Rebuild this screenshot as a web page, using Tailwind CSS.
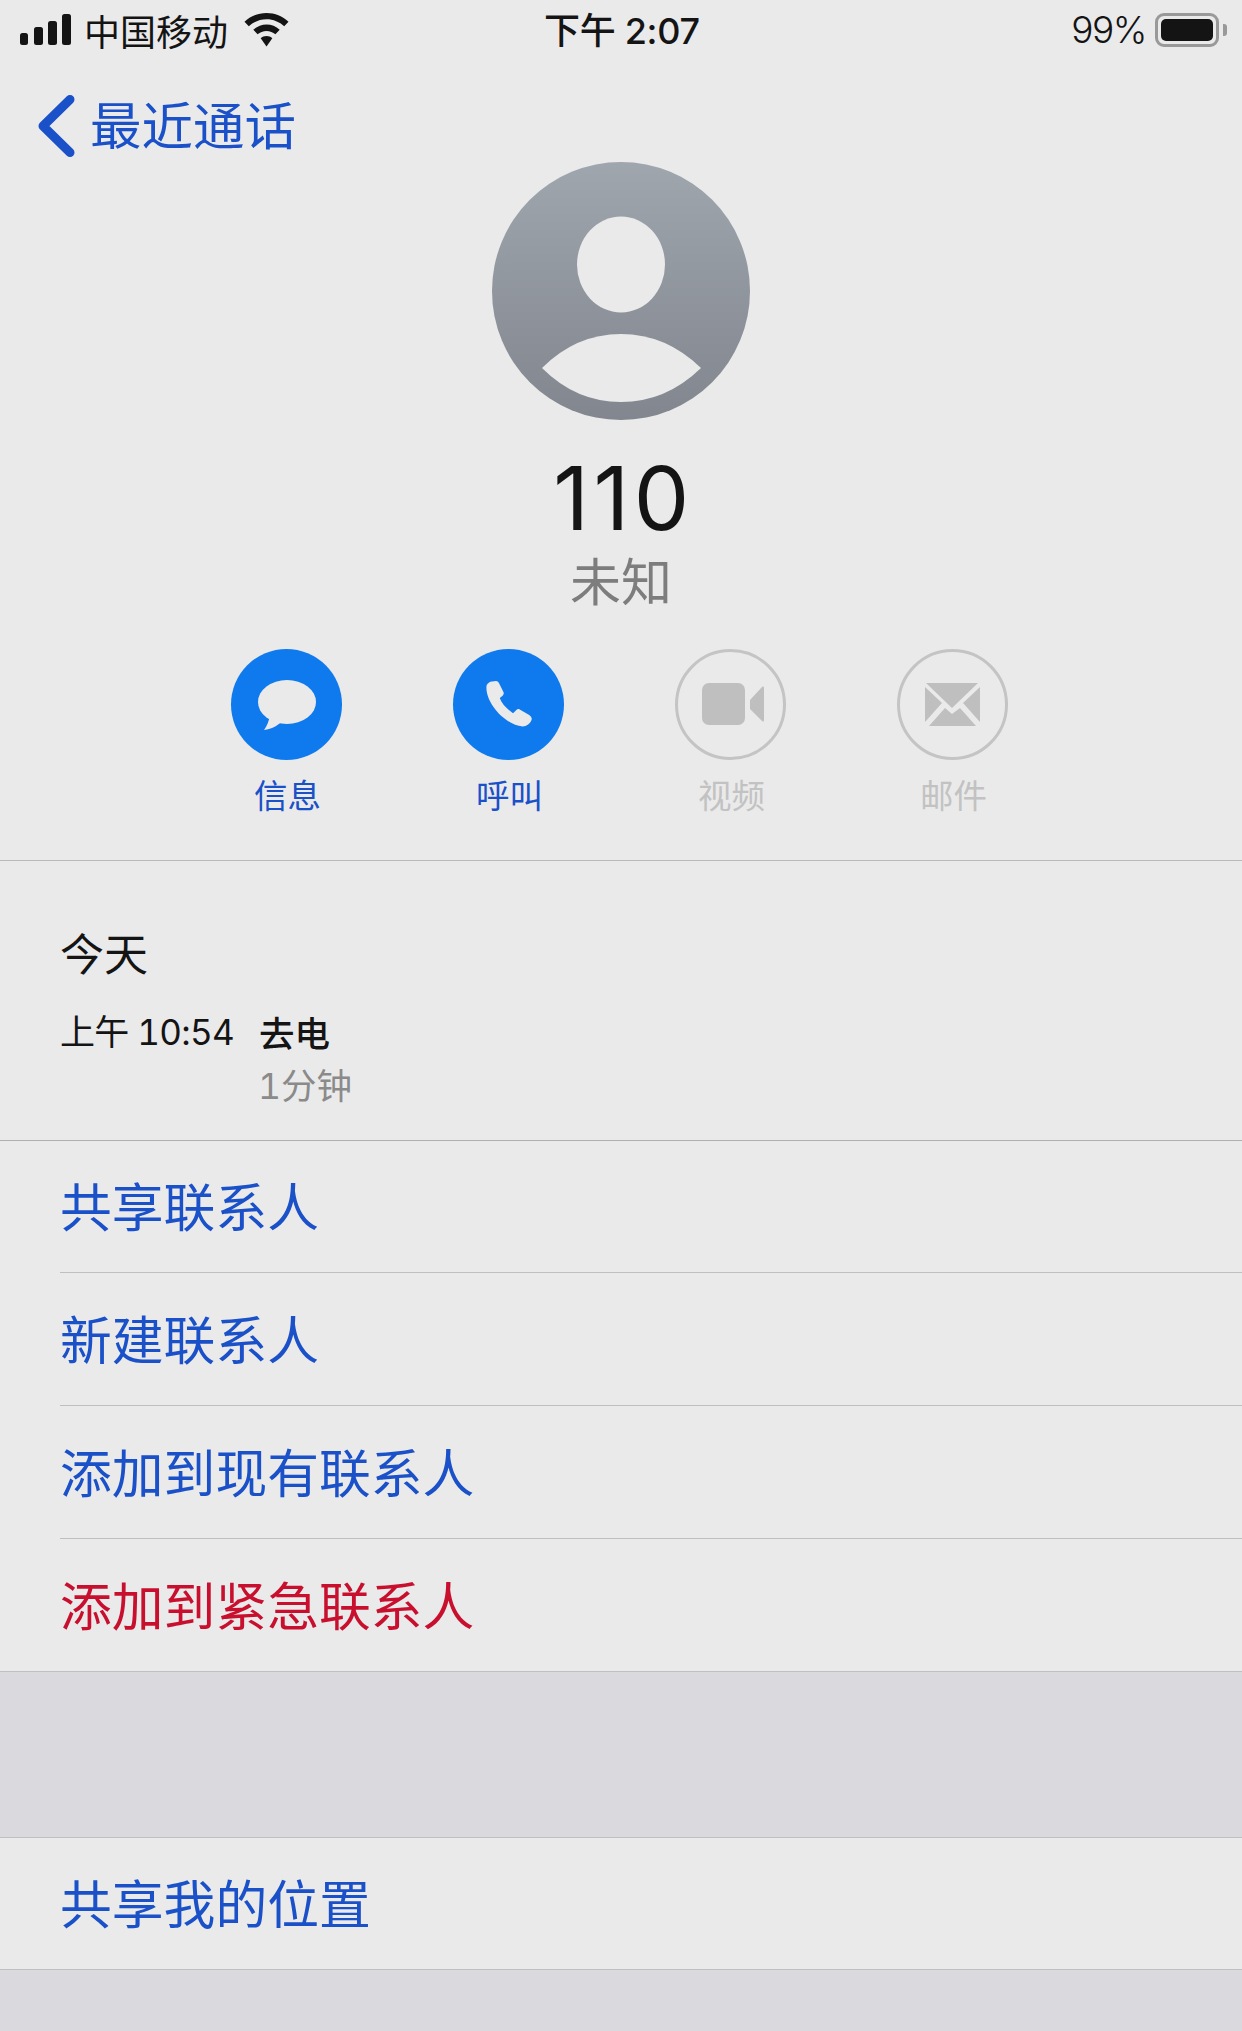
<!doctype html>
<html lang="zh-CN">
<head>
<meta charset="utf-8">
<script src="https://cdn.jsdelivr.net/npm/@tailwindcss/browser@4"></script>
<title>110</title>
</head>
<body class="m-0 bg-[#eaeaeb]">
<main class="w-[1242px] h-[2031px] overflow-hidden bg-[#eaeaeb] font-['Inter','Noto_Sans_CJK_SC',sans-serif] text-[#141414]">
  <header class="relative h-[60px] flex items-center justify-between pl-[20px] pr-[15px]">
    <div class="flex items-center">
      <svg class="w-[51px] h-[32px]" viewBox="0 0 51 32"><rect x="0" y="19" width="8" height="12" rx="2.500" fill="#141414"/><rect x="14" y="13" width="9" height="18" rx="2.500" fill="#141414"/><rect x="28" y="7" width="9" height="24" rx="2.500" fill="#141414"/><rect x="42" y="0" width="9" height="31" rx="2.500" fill="#141414"/></svg>
      <span class="ml-[13px] text-[36px] leading-[40px] font-['Noto_Sans_CJK_SC',sans-serif]">中国移动</span>
      <svg class="ml-[16px] w-[45px] h-[34px]" viewBox="0 0 45 34"><path d="M22.500 0C14 0 6.500 3.200 0.500 8.700L4.800 13.300C9.500 9 15.700 6.300 22.500 6.300S35.500 9 40.200 13.300L44.500 8.700C38.500 3.200 31 0 22.500 0Z" fill="#141414"/><path d="M22.500 11.500C17.500 11.500 13 13.400 9.300 16.700L13.600 21.300C16 19.200 19.100 17.900 22.500 17.900S29 19.200 31.400 21.300L35.700 16.700C32 13.400 27.500 11.500 22.500 11.500Z" fill="#141414"/><path d="M22.500 23C20.300 23 18.200 23.800 16.700 25.300L22.500 33.500L28.300 25.300C26.800 23.800 24.700 23 22.500 23Z" fill="#141414"/></svg>
    </div>
    <span class="absolute left-[544px] top-[11px] text-[36px] leading-[40px] font-medium whitespace-nowrap tracking-[-0.3px]">下午 2:07</span>
    <div class="flex items-center">
      <span class="text-[37px] leading-[40px] font-light mr-[9px] tracking-[-1.5px]">99%</span>
      <div class="w-[64px] h-[34px] rounded-[9px] border-[3px] border-[#999999] p-[3px]"><div class="w-full h-full rounded-[5px] bg-[#141414]"></div></div>
      <div class="ml-[4px] w-[4px] h-[12px] rounded-r-[3px] bg-[#999999]"></div>
    </div>
  </header>

  <nav class="h-[102px] flex items-start pl-[37px] pt-[34px] text-[#1a50c8]">
    <svg class="w-[39px] h-[64px]" viewBox="0 0 39 64"><path d="M33 5.500L6 32L33 58.500" fill="none" stroke="#1a50c8" stroke-width="9" stroke-linecap="round" stroke-linejoin="round"/></svg>
    <span class="ml-[14px] mt-[5px] text-[51.500px] leading-[48px] font-['Noto_Sans_CJK_SC',sans-serif]">最近通话</span>
  </nav>

  <section class="flex flex-col items-center">
    <svg class="w-[258px] h-[258px]" viewBox="0 0 258 258">
      <defs><linearGradient id="av" x1="0" y1="0" x2="0" y2="1"><stop offset="0" stop-color="#9fa6ae"/><stop offset="1" stop-color="#82868e"/></linearGradient></defs>
      <circle cx="129" cy="129" r="129" fill="url(#av)"/>
      <ellipse cx="129" cy="102.500" rx="44" ry="48" fill="#eaeaeb"/>
      <path d="M50 206Q84 172 129 172T209 206Q174 240 129 240T50 206Z" fill="#eaeaeb"/>
    </svg>
    <h1 class="mt-[28px] ml-[5px] h-[100px] text-[88px] leading-[100px] font-normal tracking-[4.500px]">110</h1>
    <p class="mt-[4px] h-[54px] text-[51px] leading-[54px] text-[#7d7d7d] font-['Noto_Sans_CJK_SC',sans-serif]">未知</p>
  </section>

  <section class="mt-[43px] h-[212px] border-b border-[#b9b9b9] flex justify-center pr-[3px] font-['Noto_Sans_CJK_SC',sans-serif]">
    <div class="w-[222px] flex flex-col items-center">
      <div class="w-[111px] h-[111px] rounded-full bg-[#0f7aee]">
        <svg class="w-[111px] h-[111px]" viewBox="0 0 111 111"><ellipse cx="56" cy="53" rx="29" ry="22" fill="#eaeaeb"/><path d="M39 66C38 72 36 77 33 81C41 80 48 76 54 70Z" fill="#eaeaeb"/></svg>
      </div>
      <span class="ml-[2px] mt-[16px] text-[33.500px] leading-[36px] text-[#1a50c8]">信息</span>
    </div>
    <div class="w-[222px] flex flex-col items-center">
      <div class="w-[111px] h-[111px] rounded-full bg-[#0f7aee]">
        <svg class="w-[111px] h-[111px]" viewBox="0 0 111 111"><path transform="translate(4 1.500) scale(.95)" d="M35 33L41 32C42.500 32 43.500 33 44 34L49 44C49.500 45.500 49 46.500 48 47.500L45 50C47 56 53 62 59 66L62.500 62.500C63.500 61.500 65 61.500 66 62L76 68C78 69.500 79 71 78.500 73C77 77 73.500 80 69 80C50 78 30 55 31 38C31 36 33 34 35 33Z" fill="#eaeaeb"/></svg>
      </div>
      <span class="ml-[2px] mt-[16px] text-[33.500px] leading-[36px] text-[#1a50c8]">呼叫</span>
    </div>
    <div class="w-[222px] flex flex-col items-center">
      <div class="w-[111px] h-[111px] rounded-full border-[3px] border-[#c4c4c4]">
        <svg class="w-[105px] h-[105px]" viewBox="0 0 105 105"><rect x="24" y="31" width="43" height="42" rx="7" fill="#bfbfbf"/><path d="M72 48L84 35C85.500 34 86 35 86 36V68C86 69.500 85.500 70 84 69L72 57Z" fill="#bfbfbf"/></svg>
      </div>
      <span class="ml-[2px] mt-[16px] text-[33.500px] leading-[36px] text-[#c2c2c2]">视频</span>
    </div>
    <div class="w-[222px] flex flex-col items-center">
      <div class="w-[111px] h-[111px] rounded-full border-[3px] border-[#c4c4c4]">
        <svg class="w-[105px] h-[105px]" viewBox="0 0 105 105"><path d="M26 31H78L52 56Z" fill="#bfbfbf"/><path d="M25 35L42 51L25 70Z" fill="#bfbfbf"/><path d="M80 35L63 51L80 70Z" fill="#bfbfbf"/><path d="M29 74L45 56L52 62L60 56L76 74Z" fill="#bfbfbf"/></svg>
      </div>
      <span class="ml-[2px] mt-[16px] text-[33.500px] leading-[36px] text-[#c2c2c2]">邮件</span>
    </div>
  </section>

  <section class="h-[279px] pl-[60px] pt-[66px]">
    <p class="text-[44px] leading-[50px] font-['Noto_Sans_CJK_SC',sans-serif]">今天</p>
    <div class="mt-[35px] flex items-center h-[40px]">
      <span class="w-[199px] text-[35px] leading-[40px] tabular-nums tracking-[-0.7px] whitespace-nowrap">上午 10:54</span>
      <span class="text-[35.500px] leading-[40px] font-medium font-['Noto_Sans_CJK_SC',sans-serif]">去电</span>
    </div>
    <p class="ml-[198px] mt-[15px] text-[35.500px] leading-[40px] text-[#8a8a8a] tabular-nums">1分钟</p>
  </section>

  <ul class="border-t border-[#b0b0b0] font-['Noto_Sans_CJK_SC',sans-serif] text-[51.800px] text-[#1a50c8]">
    <li class="h-[132px] pl-[60px]"><div class="h-full flex items-center pb-[3px] border-b border-[#bfbfc2]">共享联系人</div></li>
    <li class="h-[133px] pl-[60px]"><div class="h-full flex items-center pb-[3px] border-b border-[#bfbfc2]">新建联系人</div></li>
    <li class="h-[133px] pl-[60px]"><div class="h-full flex items-center pb-[3px] border-b border-[#bfbfc2]">添加到现有联系人</div></li>
    <li class="h-[132px] pl-[60px] pb-[3px] flex items-center text-[#c8102e]">添加到紧急联系人</li>
  </ul>

  <div class="h-[167px] bg-[#d9d9de] border-y border-[#bfbfc2]"></div>
  <div class="h-[131px] pl-[60px] pb-[3px] flex items-center text-[51.800px] text-[#1a50c8] font-['Noto_Sans_CJK_SC',sans-serif]">共享我的位置</div>
  <div class="h-[62px] bg-[#d9d9de] border-t border-[#bfbfc2]"></div>
</main>
</body>
</html>
